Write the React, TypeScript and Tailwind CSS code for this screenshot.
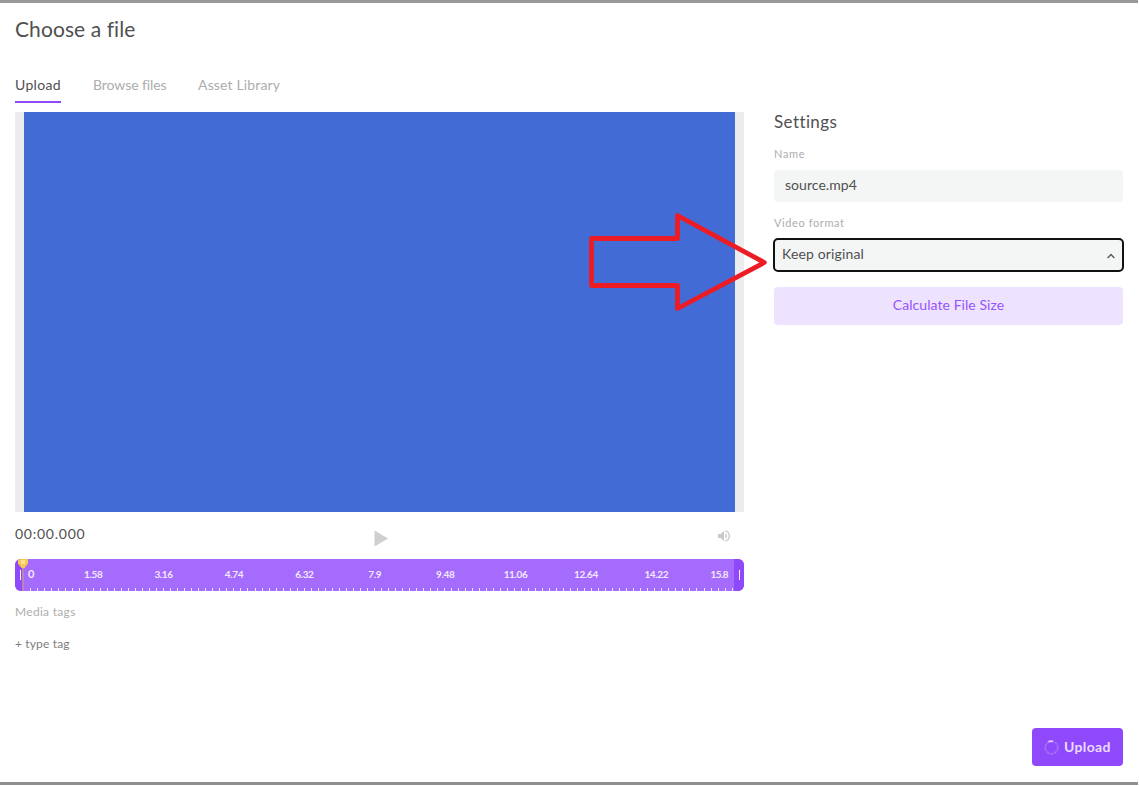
const labels = ['1.58', '3.16', '4.74', '6.32', '7.9', '9.48', '11.06', '12.64', '14.22'];

function Timeline() {
  return (
    <div className="relative mt-[14px] flex h-8 w-[729px] overflow-hidden rounded-[6px] bg-[#a56bfc] text-[10px] font-bold leading-8 text-[#f3e9ff]">
      <div className="flex w-[9px] shrink-0 items-center bg-[#8f49fb] pl-[5px]">
        <span className="h-[10px] w-px bg-white" />
      </div>
      <div className="flex w-[710px] shrink-0 flex-col">
        <div className="flex h-[29px] w-full items-center">
          <span className="w-[34px] shrink-0 pl-1 text-[11px]">0</span>
          {labels.map((t) => (
            <span key={t} className="w-[70.4px] shrink-0 text-center tracking-[-0.35px]">{t}</span>
          ))}
          <span className="grow pr-[6px] text-right tracking-[-0.6px]">15.8</span>
        </div>
        <div className="flex h-[3px] justify-between pl-[6px]">
          {Array.from({ length: 101 }, (_, i) => (
            <span key={i} className="h-[3px] w-px bg-[#eee2ff]" />
          ))}
        </div>
      </div>
      <div className="flex grow items-center bg-[#8f49fb] pl-[5px]">
        <span className="h-[10px] w-px bg-white" />
      </div>
      <svg className="absolute left-[3px] top-0" width="10" height="32" viewBox="0 0 10 32">
        <path d="M4 7h2v25H4z" fill="#bd85b5" />
        <path d="M0 0h10v4.5L6.5 9h-3L0 4.5z" fill="#f9c94f" />
        <path d="M3 1h4v4H3z" fill="#ffe396" />
      </svg>
    </div>
  );
}

export default function App() {
  return (
    <div className="relative flex h-[786px] w-[1139px] flex-col overflow-hidden bg-white font-['Lato',sans-serif] font-normal text-[#505050]">
      <div className="mr-px h-[3px] shrink-0 bg-[#999]" />
      <header className="flex h-[109px] shrink-0 flex-col pl-[15px]">
        <h1 className="mt-[11px] text-[21px] leading-[30px] tracking-[0.08px]">Choose a file</h1>
        <nav className="mt-[30px] flex gap-8 text-[14px] leading-[22px] text-[#adadad]">
          <span className="h-[29px] w-[46px] whitespace-nowrap border-b-2 border-[#8f49fb] tracking-[0.3px] text-[#505050]">Upload</span>
          <span className="w-[73px] whitespace-nowrap tracking-[-0.08px]">Browse files</span>
          <span className="whitespace-nowrap tracking-[0.15px]">Asset Library</span>
        </nav>
      </header>
      <main className="flex h-[616px] shrink-0 gap-[30px] pl-[15px]">
        <section className="w-[729px]">
          <div className="h-[400px] bg-[#ececee] px-[9px]">
            <div className="h-full bg-[#426bd6]" />
          </div>
          <div className="flex h-[33px] items-start">
            <span className="mt-[12px] w-[359px] text-[14px] leading-5 tracking-[0.75px]">00:00.000</span>
            <svg className="mt-[18px]" width="14" height="17" viewBox="0 0 14 17"><path d="M.5.5 14 8.5.5 16.5z" fill="#cfcfcf" /></svg>
            <svg className="ml-[328px] mt-[16px]" width="16" height="16" viewBox="0 0 24 24" fill="#cacaca"><path d="M3 9v6h4l5 5V4L7 9H3zm13.5 3A4.5 4.5 0 0 0 14 7.97v8.05A4.5 4.5 0 0 0 16.5 12zM14 3.23v2.06a7 7 0 0 1 0 13.42v2.06a9 9 0 0 0 0-17.54z" /></svg>
          </div>
          <Timeline />
          <div className="mt-[12px] text-[12px] leading-[18px] tracking-[0.3px] text-[#adadad]">Media tags</div>
          <div className="mt-[14px] text-[12px] leading-[18px] tracking-[0.15px] text-[#7d7d7d]">+ type tag</div>
        </section>
        <section className="w-[349px]">
          <h2 className="text-[17px] leading-5 tracking-[0.4px]">Settings</h2>
          <div className="mt-[13px] text-[11px] leading-[18px] tracking-[0.7px] text-[#adadad]">Name</div>
          <div className="mt-[7px] h-8 rounded bg-[#f4f6f6] pl-[11px] text-[14px] leading-[30px] tracking-[0.05px]">source.mp4</div>
          <div className="mt-[12px] text-[11px] leading-[18px] tracking-[0.6px] text-[#adadad]">Video format</div>
          <div className="-mx-px mt-[6px] flex h-[34px] items-center justify-between rounded-[5px] border-2 border-[#111] bg-[#f4f6f6] pl-[7px] pr-[7px] text-[14px]">
            <span className="-mt-[3px] tracking-[0.15px]">Keep original</span>
            <svg width="8" height="6" viewBox="0 0 8 6" className="mt-px" fill="none" stroke="#555" strokeWidth="1.3"><path d="M.6 5 4 1.5 7.4 5" /></svg>
          </div>
          <div className="mt-[15px] h-[38px] rounded bg-[#eee3fe] text-center text-[14px] leading-[36px] tracking-[0.06px] text-[#9653fb]">Calculate File Size</div>
        </section>
      </main>
      <footer className="flex h-[54px] shrink-0 justify-end pr-4">
        <button className="flex h-[38px] w-[91px] items-center rounded bg-[#8f49fb] pl-[12px] text-[14px] font-bold text-[#eadcff]">
          <svg width="15" height="15" viewBox="0 0 15 15" fill="none"><circle cx="7.5" cy="7.5" r="6.3" stroke="#a66efc" strokeWidth="1.7" strokeDasharray="3.2 0.8" /><path d="M4.5 1.8A6.3 6.3 0 0 1 9 1.4" stroke="#e3cfff" strokeWidth="1.6" /></svg>
          <span className="-mt-[2px] ml-[5px] tracking-[0.35px]">Upload</span>
        </button>
      </footer>
      <div className="mr-px h-[3px] shrink-0 bg-[#8f8f8f]" />
      <svg className="absolute left-[586px] top-[208px]" width="184" height="108" fill="none" stroke="#ed1c24" strokeWidth="4.8" strokeLinejoin="round">
        <path d="M5.5 30.5H91.5V7.5L178.3 54.5 91.5 100.5V77.5H5.5z" />
      </svg>
    </div>
  );
}
